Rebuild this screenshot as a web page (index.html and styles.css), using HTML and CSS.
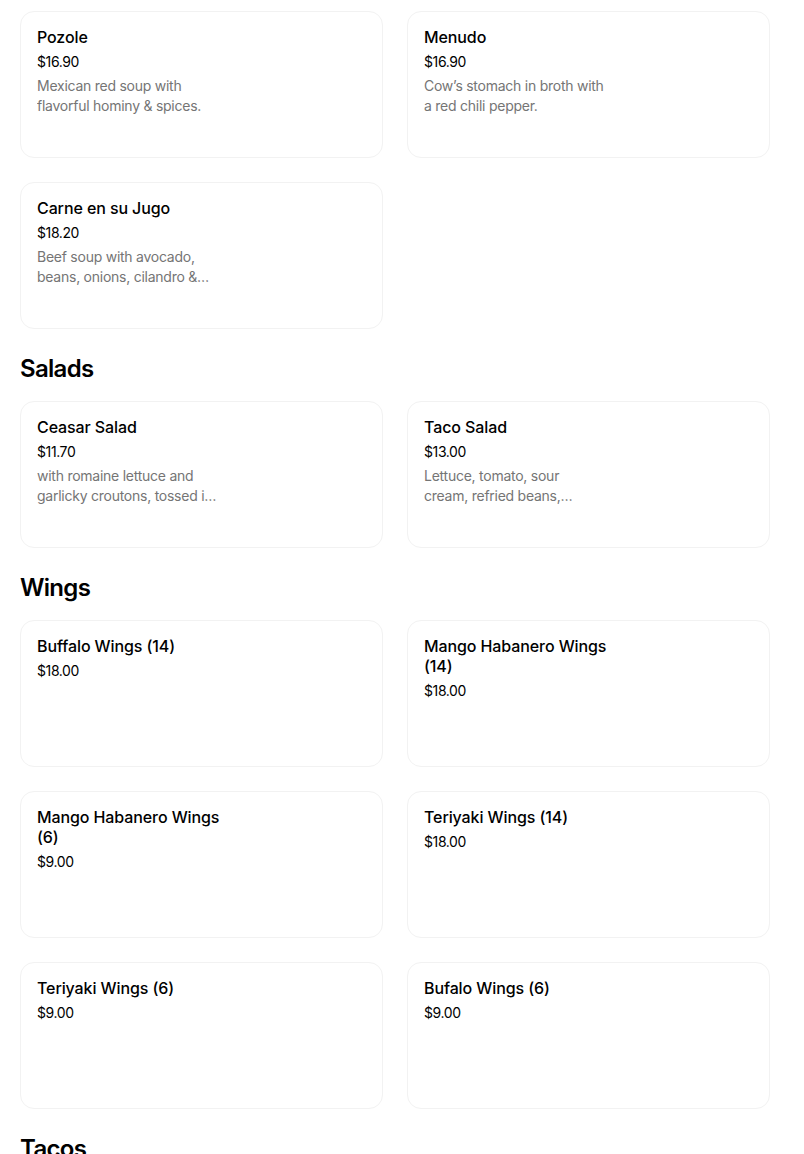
FILE: index.html
```html
<!DOCTYPE html>
<html lang="en">
<head>
<meta charset="utf-8">
<title>Menu</title>
<link rel="stylesheet" href="styles.css">
</head>
<body>
<main class="menu">
  <section class="section section-first">
    <div class="grid">
      <div class="card">
        <div class="info">
          <div class="name">Pozole</div>
          <div class="price">$16.90</div>
          <div class="desc">Mexican red soup with flavorful hominy &amp; spices.</div>
        </div>
      </div>
      <div class="card">
        <div class="info">
          <div class="name">Menudo</div>
          <div class="price">$16.90</div>
          <div class="desc">Cow’s stomach in broth with a red chili pepper.</div>
        </div>
      </div>
      <div class="card">
        <div class="info">
          <div class="name">Carne en su Jugo</div>
          <div class="price">$18.20</div>
          <div class="desc">Beef soup with avocado, beans, onions, cilandro &amp; lime served with tortillas.</div>
        </div>
      </div>
    </div>
  </section>

  <section class="section">
    <h2 class="heading">Salads</h2>
    <div class="grid">
      <div class="card">
        <div class="info">
          <div class="name">Ceasar Salad</div>
          <div class="price">$11.70</div>
          <div class="desc">with romaine lettuce and garlicky croutons, tossed in a creamy dressing.</div>
        </div>
      </div>
      <div class="card">
        <div class="info">
          <div class="name">Taco Salad</div>
          <div class="price">$13.00</div>
          <div class="desc">Lettuce, tomato, sour cream, refried beans, cheese and guacamole.</div>
        </div>
      </div>
    </div>
  </section>

  <section class="section">
    <h2 class="heading">Wings</h2>
    <div class="grid">
      <div class="card">
        <div class="info">
          <div class="name">Buffalo Wings (14)</div>
          <div class="price">$18.00</div>
        </div>
      </div>
      <div class="card">
        <div class="info">
          <div class="name">Mango Habanero Wings (14)</div>
          <div class="price">$18.00</div>
        </div>
      </div>
      <div class="card">
        <div class="info">
          <div class="name">Mango Habanero Wings (6)</div>
          <div class="price">$9.00</div>
        </div>
      </div>
      <div class="card">
        <div class="info">
          <div class="name">Teriyaki Wings (14)</div>
          <div class="price">$18.00</div>
        </div>
      </div>
      <div class="card">
        <div class="info">
          <div class="name">Teriyaki Wings (6)</div>
          <div class="price">$9.00</div>
        </div>
      </div>
      <div class="card">
        <div class="info">
          <div class="name">Bufalo Wings (6)</div>
          <div class="price">$9.00</div>
        </div>
      </div>
    </div>
  </section>

  <section class="section">
    <h2 class="heading">Tacos</h2>
  </section>
</main>
</body>
</html>
```

FILE: styles.css
```css
* {
  box-sizing: border-box;
}

html, body {
  margin: 0;
  padding: 0;
  background: #ffffff;
}

body {
  font-family: Inter, "Liberation Sans", Arial, sans-serif;
  color: #000000;
  overflow: hidden;
}

.menu {
  width: 750px;
  margin-left: 20px;
  padding-top: 11px;
}

.section {
  padding-top: 24px;
}

.section-first {
  padding-top: 0;
}

.heading {
  margin: 0 0 16px;
  font-size: 24px;
  line-height: 32px;
  font-weight: 600;
  letter-spacing: -0.7px;
}

.grid {
  display: grid;
  grid-template-columns: 1fr 1fr;
  gap: 24px;
}

.card {
  height: 147px;
  border: 1px solid #f2f2f2;
  border-radius: 14px;
  padding: 15px 16px;
  display: flex;
}

.info {
  width: 192px;
}

.name {
  font-size: 16px;
  line-height: 20px;
  font-weight: 500;
  color: #000000;
  letter-spacing: -0.1px;
}

.price {
  margin-top: 5px;
  font-size: 14px;
  line-height: 20px;
  color: #000000;
  letter-spacing: -0.4px;
}

.desc {
  width: 181.5px;
  margin-top: 4px;
  font-size: 14px;
  line-height: 20px;
  color: #757575;
  letter-spacing: -0.25px;
  display: -webkit-box;
  -webkit-line-clamp: 2;
  -webkit-box-orient: vertical;
  overflow: hidden;
}
```
